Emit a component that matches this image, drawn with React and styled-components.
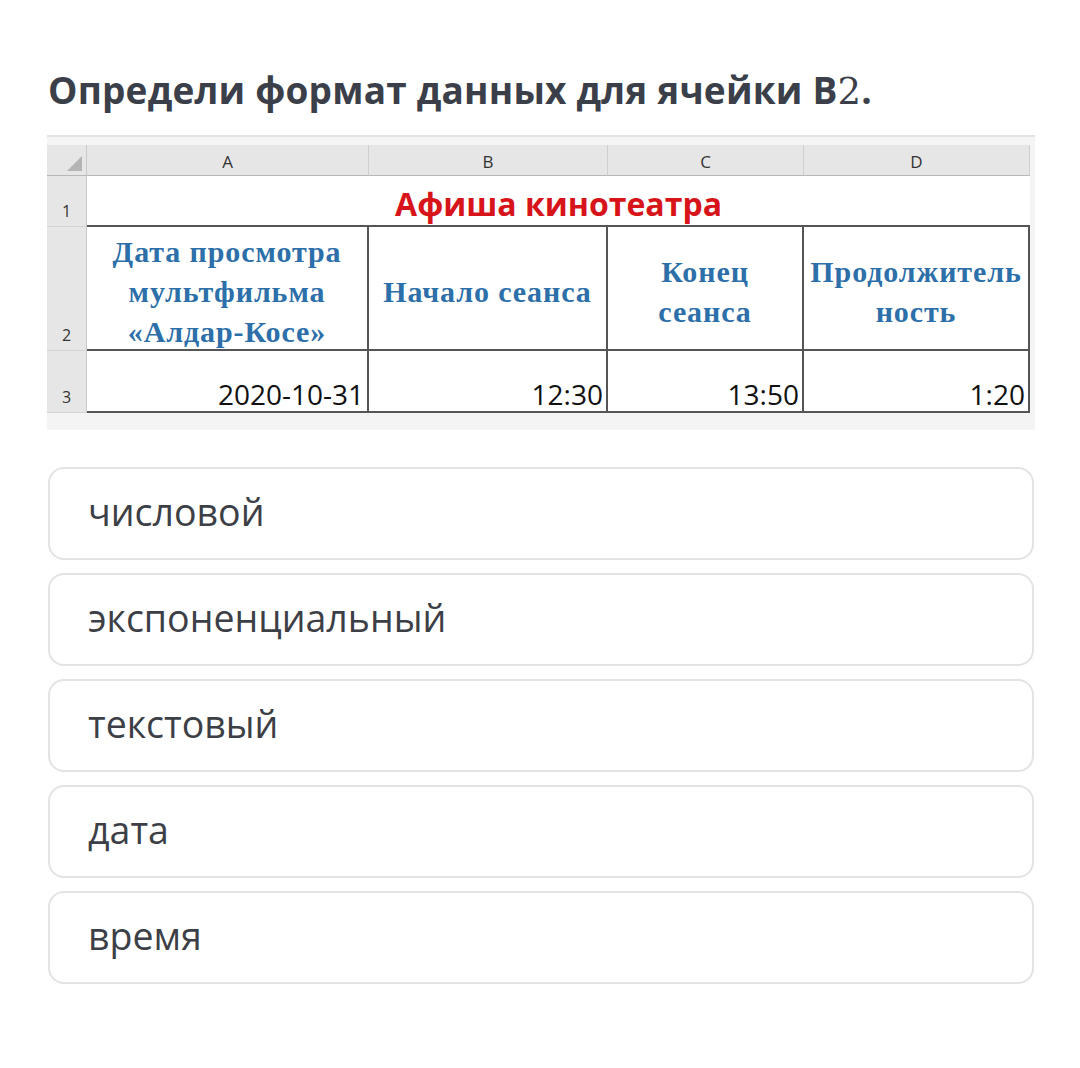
import React from "react";
import styled, { createGlobalStyle } from "styled-components";

const GlobalStyle = createGlobalStyle`
  body {
    margin: 0;
    background: #ffffff;
    font-family: "Open Sans", "Liberation Sans", sans-serif;
  }
`;

const Page = styled.div`
  width: 1080px;
  padding: 62px 46px 0 48px;
  box-sizing: border-box;
`;

const Title = styled.h1`
  margin: 0 0 15px;
  font-size: 37px;
  line-height: 56px;
  font-weight: 700;
  color: #3b3f49;
  letter-spacing: 0.2px;
  .num {
    font-family: "DejaVu Serif", "Liberation Serif", serif;
    font-weight: 400;
  }
`;

const Sheet = styled.div`
  width: 988px;
  margin-left: -1px;
  background: #f4f4f4;
  padding-top: 8px;
  border-top: 2px solid #e3e3e3;
  display: grid;
  grid-template-columns: 40px 282px 239px 196px 226px 5px;
  grid-template-rows: 31px 51px 124px 62px 17px;
`;

const Corner = styled.div`
  background: #e6e6e6;
  border-right: 1px solid #c9c9c9;
  border-bottom: 1px solid #b8b8b8;
  position: relative;
  &::after {
    content: "";
    position: absolute;
    right: 4px;
    bottom: 4px;
    border-style: solid;
    border-width: 0 0 15px 15px;
    border-color: transparent transparent #b4b4b4 transparent;
  }
`;

const ColHead = styled.div`
  background: #e6e6e6;
  border-right: 1px solid #cfcfcf;
  border-bottom: 1px solid #b8b8b8;
  display: flex;
  align-items: center;
  justify-content: center;
  font-family: "Open Sans", "Liberation Sans", sans-serif;
  font-size: 17px;
  color: #333;
  padding-top: 3px;
`;

const RowHead = styled.div`
  background: #e6e6e6;
  border-right: 1px solid #c9c9c9;
  border-bottom: 1px solid #d4d4d4;
  display: flex;
  align-items: flex-end;
  justify-content: center;
  padding-bottom: 4px;
  font-family: "Open Sans", "Liberation Sans", sans-serif;
  font-size: 16px;
  color: #333;
`;

const Pad = styled.div`
  background: #f4f4f4;
  grid-column: ${(p) => p.$span || "auto"};
`;

const TitleCell = styled.div`
  grid-column: span 4;
  background: #fff;
  display: flex;
  align-items: flex-end;
  justify-content: center;
  padding-bottom: 0;
  font-family: "Open Sans", "Liberation Sans", sans-serif;
  font-weight: 700;
  font-size: 32px;
  color: #d7141a;
  border-bottom: 2px solid #555;
`;

const Cell = styled.div`
  background: #fff;
  border-right: 2px solid #555;
  border-bottom: 2px solid #555;
  display: flex;
  align-items: ${(p) => (p.$bottom ? "flex-end" : "center")};
  justify-content: ${(p) => (p.$right ? "flex-end" : "center")};
  text-align: center;
  padding: ${(p) => (p.$right ? "0 3px 0 0" : "8px 2px 0")};
  font-family: ${(p) =>
    p.$right ? '"Open Sans", "Liberation Sans", sans-serif' : '"Liberation Serif", serif'};
  font-weight: ${(p) => (p.$right ? 400 : 700)};
  font-size: ${(p) => (p.$right ? "28px" : "30px")};
  letter-spacing: ${(p) => (p.$right ? "0" : "0.9px")};
  line-height: ${(p) => (p.$right ? "34px" : "40px")};
  color: ${(p) => (p.$right ? "#111" : "#2c6fa9")};
  box-sizing: border-box;
  white-space: nowrap;
`;

const Options = styled.div`
  display: flex;
  flex-direction: column;
  gap: 13px;
  margin-top: 37px;
`;

const Option = styled.div`
  height: 93px;
  border: 2px solid #e3e3e3;
  border-radius: 16px;
  box-sizing: border-box;
  display: flex;
  align-items: center;
  padding-left: 38px;
  font-size: 37.5px;
  color: #3d3f46;
  padding-bottom: 4px;
`;

const answers = ["числовой", "экспоненциальный", "текстовый", "дата", "время"];

export default function App() {
  return (
    <>
      <GlobalStyle />
      <Page>
        <Title>
          Определи формат данных для ячейки B<span className="num">2</span>.
        </Title>
        <Sheet>
          <Corner />
          <ColHead>A</ColHead>
          <ColHead>B</ColHead>
          <ColHead>C</ColHead>
          <ColHead>D</ColHead>
          <Pad />

          <RowHead>1</RowHead>
          <TitleCell>Афиша кинотеатра</TitleCell>
          <Pad />

          <RowHead>2</RowHead>
          <Cell>
            Дата просмотра
            <br />
            мультфильма
            <br />
            «Алдар-Косе»
          </Cell>
          <Cell>Начало сеанса</Cell>
          <Cell>
            Конец
            <br />
            сеанса
          </Cell>
          <Cell>
            Продолжитель
            <br />
            ность
          </Cell>
          <Pad />

          <RowHead>3</RowHead>
          <Cell $right $bottom>2020-10-31</Cell>
          <Cell $right $bottom>12:30</Cell>
          <Cell $right $bottom>13:50</Cell>
          <Cell $right $bottom>1:20</Cell>
          <Pad />

          <Pad $span="span 6" />
        </Sheet>
        <Options>
          {answers.map((a) => (
            <Option key={a}>{a}</Option>
          ))}
        </Options>
      </Page>
    </>
  );
}
